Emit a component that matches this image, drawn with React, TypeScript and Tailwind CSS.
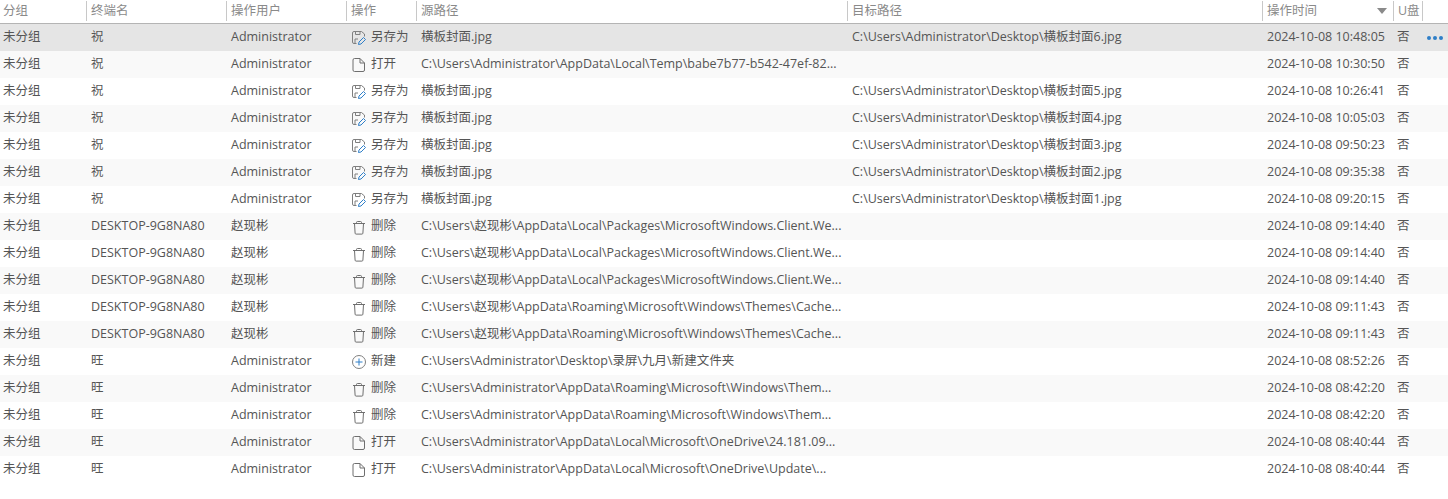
const cols = "grid grid-cols-[86px_140px_120px_70px_431px_415px_131px_30px_1fr]";

function SaveAsIcon() {
  return (
    <svg width="14" height="14" viewBox="0 0 14 14" fill="none" className="shrink-0">
      <path d="M4.5 12.5H2A1.5 1.5 0 0 1 .5 11V2A1.5 1.5 0 0 1 2 .5h7.5L12.5 3v2.5" stroke="#7f7f7f" strokeWidth="1" />
      <path d="M3.5.5v3h4.5v-3" stroke="#7f7f7f" strokeWidth="1" />
      <path d="M3 12V8h3" stroke="#7f7f7f" strokeWidth="1" />
      <path d="M6.5 13.5l.5-2.5 4.5-4.5 2 2L9 13z" stroke="#2f7fc8" strokeWidth="1" strokeLinejoin="round" />
    </svg>
  );
}

function FileIcon() {
  return (
    <svg width="14" height="14" viewBox="0 0 14 14" fill="none" className="shrink-0">
      <path d="M2.5.5h5.5l4.5 4.5v7a1.5 1.5 0 0 1-1.5 1.5H2.500A1.500 1.500 0 0 1 1 12V2A1.500 1.500 0 0 1 2.500.5z" stroke="#6f6f6f" strokeWidth="1" />
      <path d="M8 .5V5h4.500" stroke="#6f6f6f" strokeWidth="1" />
    </svg>
  );
}

function TrashIcon() {
  return (
    <svg width="14" height="14" viewBox="0 0 14 14" fill="none" className="shrink-0 translate-y-[1px]">
      <path d="M1 2.500h12" stroke="#6f6f6f" strokeWidth="1" />
      <path d="M4.500 2.500V1.500a1 1 0 0 1 1-1h3a1 1 0 0 1 1 1v1" stroke="#6f6f6f" strokeWidth="1" />
      <path d="M2.500 2.500l.6 9.700a1 1 0 0 0 1 .9h5.800a1 1 0 0 0 1-.9l.6-9.700" stroke="#6f6f6f" strokeWidth="1" />
    </svg>
  );
}

function NewIcon() {
  return (
    <svg width="14" height="14" viewBox="0 0 14 14" fill="none" className="shrink-0">
      <circle cx="7" cy="7" r="6.500" stroke="#7f7f7f" strokeWidth="1" />
      <path d="M7 3.500v7M3.500 7h7" stroke="#2f7fc8" strokeWidth="1" />
    </svg>
  );
}

const ops: Record<string, { label: string; icon: React.ReactNode }> = {
  save: { label: "另存为", icon: <SaveAsIcon /> },
  open: { label: "打开", icon: <FileIcon /> },
  del: { label: "删除", icon: <TrashIcon /> },
  add: { label: "新建", icon: <NewIcon /> },
};

const A = "Administrator";
const D = "DESKTOP-9G8NA80";
const Z = "赵现彬";
const pkg = "C:\\Users\\赵现彬\\AppData\\Local\\Packages\\MicrosoftWindows.Client.We...";
const theme = "C:\\Users\\赵现彬\\AppData\\Roaming\\Microsoft\\Windows\\Themes\\Cache...";
const adminTheme = "C:\\Users\\Administrator\\AppData\\Roaming\\Microsoft\\Windows\\Them...";
const cover = "横板封面.jpg";
const target = (n: number) => `C:\\Users\\Administrator\\Desktop\\横板封面${n}.jpg`;

const rows = [
  ["祝", A, "save", cover, target(6), "2024-10-08 10:48:05"],
  ["祝", A, "open", "C:\\Users\\Administrator\\AppData\\Local\\Temp\\babe7b77-b542-47ef-82...", "", "2024-10-08 10:30:50"],
  ["祝", A, "save", cover, target(5), "2024-10-08 10:26:41"],
  ["祝", A, "save", cover, target(4), "2024-10-08 10:05:03"],
  ["祝", A, "save", cover, target(3), "2024-10-08 09:50:23"],
  ["祝", A, "save", cover, target(2), "2024-10-08 09:35:38"],
  ["祝", A, "save", cover, target(1), "2024-10-08 09:20:15"],
  [D, Z, "del", pkg, "", "2024-10-08 09:14:40"],
  [D, Z, "del", pkg, "", "2024-10-08 09:14:40"],
  [D, Z, "del", pkg, "", "2024-10-08 09:14:40"],
  [D, Z, "del", theme, "", "2024-10-08 09:11:43"],
  [D, Z, "del", theme, "", "2024-10-08 09:11:43"],
  ["旺", A, "add", "C:\\Users\\Administrator\\Desktop\\录屏\\九月\\新建文件夹", "", "2024-10-08 08:52:26"],
  ["旺", A, "del", adminTheme, "", "2024-10-08 08:42:20"],
  ["旺", A, "del", adminTheme, "", "2024-10-08 08:42:20"],
  ["旺", A, "open", "C:\\Users\\Administrator\\AppData\\Local\\Microsoft\\OneDrive\\24.181.09...", "", "2024-10-08 08:40:44"],
  ["旺", A, "open", "C:\\Users\\Administrator\\AppData\\Local\\Microsoft\\OneDrive\\Update\\...", "", "2024-10-08 08:40:44"],
];

const headers = ["终端名", "操作用户", "操作", "源路径", "目标路径"];

export default function App() {
  return (
    <div className="h-[499px] w-[1448px] overflow-hidden bg-white text-[12.5px] text-[#555] font-['Open_Sans','Noto_Sans_CJK_SC',sans-serif]">
      <div className={`${cols} h-[24px] border-b border-[#b4b4b4] text-[#8a8a8a]`}>
        <div className="flex items-center pl-[3px]">分组</div>
        {headers.map((h) => (
          <div key={h} className="my-[1px] flex h-[20px] items-center border-l border-[#c8c8c8] pl-[4px]">
            {h}
          </div>
        ))}
        <div className="my-[1px] flex h-[20px] items-center justify-between border-l border-[#c8c8c8] pl-[4px] pr-[6px]">
          操作时间
          <span className="h-0 w-0 border-x-[5px] border-t-[6px] border-x-transparent border-t-[#8a8a8a]" />
        </div>
        <div className="my-[1px] flex h-[20px] items-center border-x border-[#c8c8c8] pl-[4px]">U盘</div>
      </div>
      {rows.map((r, i) => (
        <div
          key={i}
          className={`${cols} h-[27px] items-center whitespace-nowrap ${
            i === 0 ? "bg-[#e5e5e5]" : i % 2 === 1 ? "bg-[#f9f9f9]" : "bg-white"
          }`}
        >
          <div className="pl-[3px]">未分组</div>
          <div className="pl-[5px]">{r[0]}</div>
          <div className="pl-[5px]">{r[1]}</div>
          <div className="flex items-center gap-[5px] pl-[6px]">
            {ops[r[2]].icon}
            {ops[r[2]].label}
          </div>
          <div className="pl-[5px]">{r[3]}</div>
          <div className="pl-[5px]">{r[4]}</div>
          <div className="pl-[5px]">{r[5]}</div>
          <div className="pl-[4px]">否</div>
          <div>
            {i === 0 && (
              <div className="flex justify-end gap-[2px] pr-[5px]">
                <span className="size-[4px] rounded-full bg-[#2f7fc8]" />
                <span className="size-[4px] rounded-full bg-[#2f7fc8]" />
                <span className="size-[4px] rounded-full bg-[#2f7fc8]" />
              </div>
            )}
          </div>
        </div>
      ))}
    </div>
  );
}
